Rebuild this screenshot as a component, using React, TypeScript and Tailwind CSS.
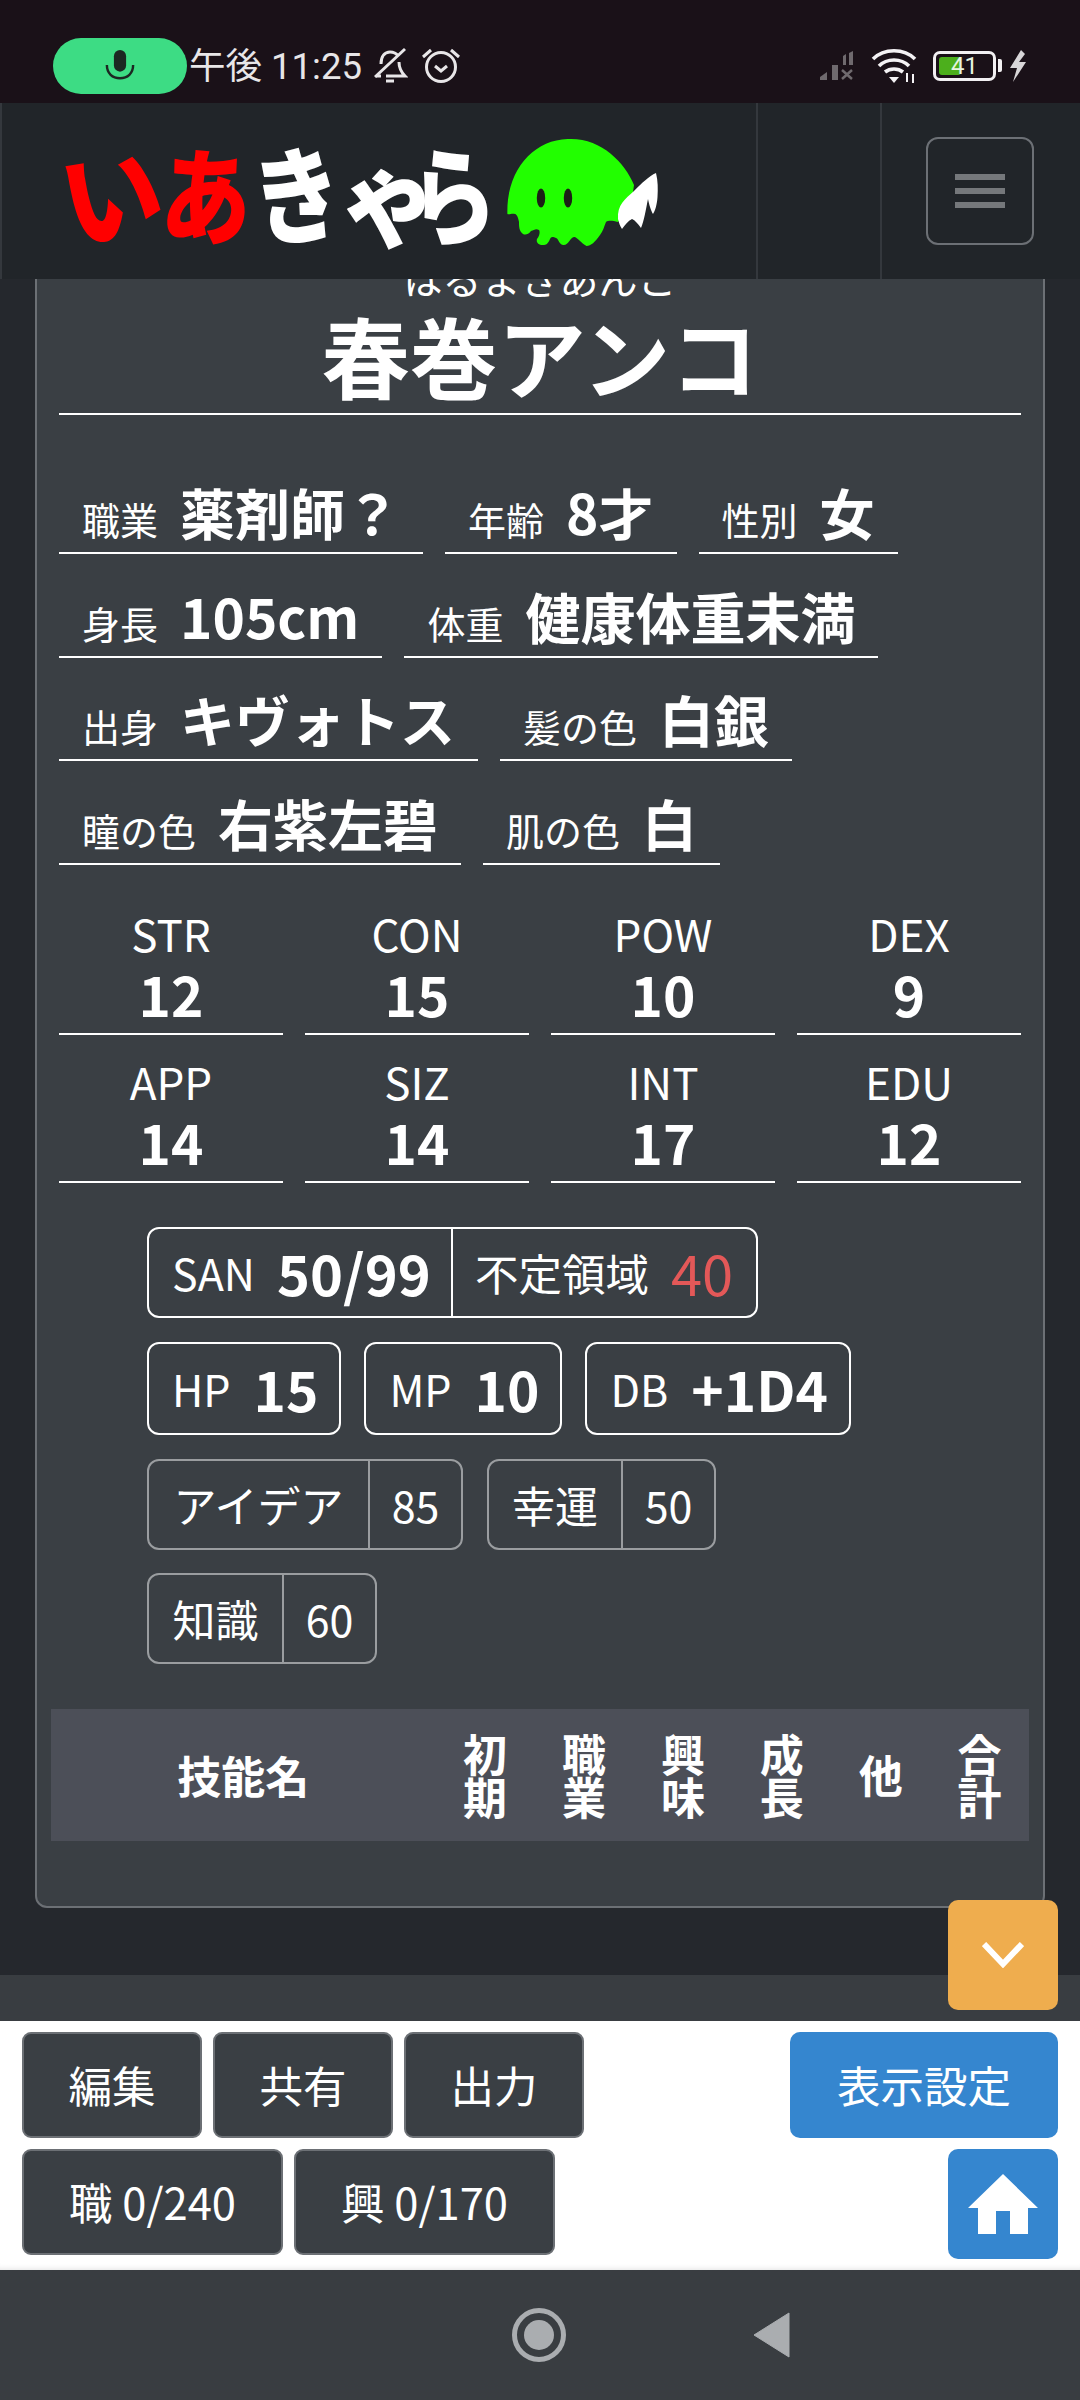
import React from "react";

const jp = "font-['Noto_Sans_CJK_JP','Noto_Sans',sans-serif]";

function Info({ label, value }: { label: string; value: string }) {
  return (
    <div className="flex items-baseline gap-[22px] h-[82px] px-[23px] border-b-2 border-white">
      <span className="text-[38px] leading-[82px] pt-[6px]">{label}</span>
      <span className="text-[55px] leading-[72px] font-bold">{value}</span>
    </div>
  );
}

function Stat({ label, value }: { label: string; value: string }) {
  return (
    <div className="flex flex-col items-center h-[126px] border-b-2 border-white">
      <span className="text-[44px] leading-[48px]">{label}</span>
      <span className="text-[55px] leading-[60px] font-bold mt-[6px]">{value}</span>
    </div>
  );
}

function Box({ label, value }: { label: string; value: string }) {
  return (
    <div className="flex items-center gap-[23px] h-[93px] pl-[23px] pr-[21px] border-2 border-white rounded-[12px]">
      <span className="text-[43px]">{label}</span>
      <span className="text-[55px] font-bold">{value}</span>
    </div>
  );
}

function Split({ label, value, w1, w2 }: { label: string; value: string; w1: string; w2: string }) {
  return (
    <div className="flex items-center h-[91px] border-2 border-[#9a9da0] rounded-[12px]">
      <span className={`text-[43px] text-center whitespace-nowrap ${w1}`}>{label}</span>
      <span className={`text-[43px] h-full flex items-center justify-center border-l-2 border-[#9a9da0] ${w2}`}>{value}</span>
    </div>
  );
}

function Head({ a, b }: { a: string; b?: string }) {
  return (
    <div className="w-[99px] flex flex-col items-center text-[44px] leading-[43px] font-bold">
      <span>{a}</span>
      {b && <span>{b}</span>}
    </div>
  );
}

function Btn({ children, w }: { children: React.ReactNode; w: string }) {
  return (
    <div className={`flex items-center justify-center h-[106px] bg-[#3a3f44] border-2 border-[#6c7075] rounded-[9px] text-white text-[43.5px] ${w}`}>
      {children}
    </div>
  );
}

function Ghost() {
  return (
    <svg width="151" height="107" viewBox="0 0 151 107" className="ml-[16px] mt-[2px] shrink-0">
      <path
        d="M0.4 75C-1 30 28 -1 64 0C95 0 118 24 127 46L125 60L111 83C106 82 102 81 99 83C97 88 96 92 93 96C88 103 84 107 79.5 107C74 104 71 99 67.6 98C63 98 62 106 56.6 106C52 106 52 100 49 99C45 97 44 98 43 100C41 105 39 106 36 106C31 106 29 103 30 100C33 96 33 92 32 91C29 89 27 91 24 92C21 96 18 96 16 95C12 92 12 87 12 83C11 77 9 75 8 75C5 74 2 76 0.4 75Z"
        fill="#22ff00"
      />
      <ellipse cx="34" cy="59" rx="4.2" ry="9.5" fill="#1c1f16" />
      <ellipse cx="61" cy="59" rx="4.2" ry="9.5" fill="#1c1f16" />
      <path
        d="M111 80C110 66 118 60 127 52C135 44 142 37 149 34C151 42 151 50 150.5 58C150 66 148 72 146 75C144 72 142 65 141 60C139 70 137 82 134 89C131 85 128 81 125 80C121 82 118 86 115 90C113 87 112 84 111 80Z"
        fill="#ffffff"
      />
    </svg>
  );
}

function Logo() {
  const c = "inline-block font-black leading-none text-[100px]";
  return (
    <div className={`flex items-center ml-[59px] h-full ${jp}`}>
      <div className="flex items-center w-[430px] h-[110px] whitespace-nowrap">
        <span className={`${c} text-[#ff0000] w-[96px] -rotate-[10deg] scale-y-[1.08]`}>い</span>
        <span className={`${c} text-[#ff0000] w-[90px] rotate-[3deg] scale-x-[0.9] scale-y-[1.05]`}>あ</span>
        <span className={`${c} text-white w-[90px] -rotate-[8deg] scale-x-[0.9] scale-y-[1.05]`}>き</span>
        <span className={`${c} text-white w-[66px] mt-[12px] -rotate-[10deg] scale-y-[1.05]`}>ゃ</span>
        <span className={`${c} text-white w-[88px] -rotate-[6deg] scale-x-[0.85] scale-y-[1.08]`}>ら</span>
      </div>
      <Ghost />
    </div>
  );
}

function StatusBar() {
  return (
    <div className="h-[103px] bg-[#1a1118] flex items-center shrink-0 text-[#e8e6e8]">
      <div className="flex items-center mt-[28px] w-full">
        <div className="ml-[53px] w-[134px] h-[56px] rounded-full bg-[#3ddc84] flex items-center justify-center shrink-0">
          <svg width="30" height="34" viewBox="0 0 32 36">
            <rect x="9.5" y="1" width="13" height="23" rx="6.5" fill="#1c2722" />
            <path d="M2 17C2 26 8 31 16 31C24 31 30 26 30 17" fill="none" stroke="#1c2722" strokeWidth="2.6" />
          </svg>
        </div>
        <span className={`ml-[2px] mt-[2px] text-[36.5px] leading-[40px] font-['Roboto','Noto_Sans_CJK_JP',sans-serif] whitespace-nowrap w-[175px]`}>午後 11:25</span>
        <svg width="36" height="38" viewBox="0 0 36 38" className="ml-[8px]" fill="none" stroke="#e8e6e8" strokeWidth="3">
          <path d="M9 17C9 9 13 5 18 5C21 5 24 6 26 9M27 15C27 20 29 25 33 29H14M4 29H9" />
          <path d="M3 30L33 2" />
          <path d="M14 34H22" />
        </svg>
        <svg width="40" height="38" viewBox="0 0 40 38" className="ml-[13px]" fill="none" stroke="#e8e6e8" strokeWidth="3">
          <circle cx="20" cy="20" r="14.5" />
          <path d="M2 10L10 3M38 10L30 3" />
          <path d="M14 19L20 24L26 19" />
        </svg>
        <svg width="38" height="30" viewBox="0 0 36 30" className="ml-[357px]" fill="#6f6a6e">
          <path d="M1 29V26L8 21V29Z" />
          <rect x="13" y="14" width="6" height="15" />
          <path d="M24 5L27 3V14H24ZM30 2L34 0V14H30Z" />
          <path d="M23 19L33 28M33 19L23 28" stroke="#6f6a6e" strokeWidth="2.5" fill="none" />
        </svg>
        <svg width="48" height="36" viewBox="0 0 48 36" className="ml-[15px]" fill="none" stroke="#f4f2f4" strokeWidth="3.6">
          <path d="M2 11C13 0 33 0 44 11" />
          <path d="M8 18C16 10 30 10 38 18" />
          <path d="M14 24C19 20 27 20 32 24" />
          <path d="M23 35L18 29H28Z" fill="#f4f2f4" stroke="none" />
          <path d="M36 25V34M42 26V35" strokeWidth="2" />
        </svg>
        <div className="relative ml-[14px] w-[63px] h-[30px] rounded-[7px] border-[3px] border-[#f2f0f2] flex items-center shrink-0">
          <div className="absolute left-[3px] top-[3px] bottom-[3px] w-[22px] rounded-[3px] bg-[#4caf1c]" />
          <span className="relative w-full text-center text-[24px] leading-[24px] text-[#e8f5e0] font-['Roboto',sans-serif]">41</span>
        </div>
        <div className="ml-[2px] w-[4px] h-[13px] bg-[#f2f0f2] rounded-r-[2px]" />
        <svg width="18" height="32" viewBox="0 0 18 32" className="ml-[7px]" fill="#d8d6d8">
          <path d="M12 0L1 18H8L4 32L17 12H10L16 4Z" />
        </svg>
      </div>
    </div>
  );
}

function Header() {
  return (
    <div className="h-[176px] bg-[#212529] border-l-2 border-[#34383d] flex shrink-0">
      <div className="w-[756px] border-r-2 border-[#34383d] h-full">
        <Logo />
      </div>
      <div className="w-[124px] border-r-2 border-[#34383d] h-full" />
      <div className="flex-1 flex items-center justify-start pl-[44px]">
        <div className="w-[108px] h-[108px] rounded-[12px] border-2 border-[#6c7075] flex flex-col items-center justify-center gap-[8px]">
          <div className="w-[50px] h-[6px] bg-[#75787b]" />
          <div className="w-[50px] h-[6px] bg-[#75787b]" />
          <div className="w-[50px] h-[6px] bg-[#75787b]" />
        </div>
      </div>
    </div>
  );
}

function Card() {
  return (
    <div className="ml-[35px] w-[1010px] h-[1657px] -mt-[28px] bg-[#3a3f44] border-2 border-[#6c7075] rounded-b-[12px] px-[22px] text-white">
      <div className="text-center text-[39px] leading-[48px]">はるまきあんこ</div>
      <div className="text-center text-[88px] leading-[100px] font-bold h-[111px] border-b-2 border-white mt-[3px]">春巻アンコ</div>
      <div className="mt-[57px] flex flex-col gap-[21.6px]">
        <div className="flex gap-[22px]">
          <Info label="職業" value="薬剤師？" />
          <Info label="年齢" value="8才" />
          <Info label="性別" value="女" />
        </div>
        <div className="flex gap-[22px]">
          <Info label="身長" value="105cm" />
          <Info label="体重" value="健康体重未満" />
        </div>
        <div className="flex gap-[22px]">
          <Info label="出身" value="キヴォトス" />
          <Info label="髪の色" value="白銀" />
        </div>
        <div className="flex gap-[22px]">
          <Info label="瞳の色" value="右紫左碧" />
          <Info label="肌の色" value="白" />
        </div>
      </div>
      <div className="mt-[44px] grid grid-cols-4 gap-x-[22px] gap-y-[22px]">
        <Stat label="STR" value="12" />
        <Stat label="CON" value="15" />
        <Stat label="POW" value="10" />
        <Stat label="DEX" value="9" />
        <Stat label="APP" value="14" />
        <Stat label="SIZ" value="14" />
        <Stat label="INT" value="17" />
        <Stat label="EDU" value="12" />
      </div>
      <div className="ml-[88px] mt-[44px] flex flex-col items-start">
        <div className="flex items-center h-[91px] w-[611px] border-2 border-white rounded-[12px]">
          <div className="flex items-center gap-[22px] w-[304px] pl-[23px] h-full border-r-2 border-white">
            <span className="text-[43px]">SAN</span>
            <span className="text-[56px] font-bold">50/99</span>
          </div>
          <div className="flex items-center gap-[22px] pl-[22px]">
            <span className="text-[43.5px]">不定領域</span>
            <span className="text-[56px] text-[#e35858]">40</span>
          </div>
        </div>
        <div className="flex gap-[23px] mt-[24px]">
          <Box label="HP" value="15" />
          <Box label="MP" value="10" />
          <Box label="DB" value="+1D4" />
        </div>
        <div className="flex gap-[24px] mt-[24px]">
          <Split label="アイデア" value="85" w1="w-[219px]" w2="w-[93px]" />
          <Split label="幸運" value="50" w1="w-[132px]" w2="w-[93px]" />
        </div>
        <div className="flex mt-[23px]">
          <Split label="知識" value="60" w1="w-[133px]" w2="w-[93px]" />
        </div>
      </div>
      <div className="-mx-[8px] mt-[45px] h-[132px] bg-[#4c4f58] flex items-center">
        <div className="w-[385px] text-center text-[44px] font-bold">技能名</div>
        <Head a="初" b="期" />
        <Head a="職" b="業" />
        <Head a="興" b="味" />
        <Head a="成" b="長" />
        <Head a="他" />
        <Head a="合" b="計" />
      </div>
    </div>
  );
}

export default function App() {
  return (
    <div className={`relative w-[1080px] h-[2400px] flex flex-col overflow-hidden bg-white ${jp}`}>
      <StatusBar />
      <Header />
      <main className="h-[1696px] bg-[#25282d] overflow-hidden shrink-0">
        <Card />
      </main>
      <div className="h-[46px] bg-[#393d41] shrink-0" />
      <div className="h-[249px] bg-white shrink-0 px-[22px] pt-[11px] flex justify-between shadow-[inset_0_-6px_6px_-6px_rgba(0,0,0,0.15)]">
        <div className="flex flex-col gap-[11px]">
          <div className="flex gap-[11px]">
            <Btn w="w-[180px]">編集</Btn>
            <Btn w="w-[180px]">共有</Btn>
            <Btn w="w-[180px]">出力</Btn>
          </div>
          <div className="flex gap-[11px]">
            <Btn w="w-[261px]">職 0/240</Btn>
            <Btn w="w-[261px]">興 0/170</Btn>
          </div>
        </div>
        <div className="flex flex-col items-end gap-[11px]">
          <div className="w-[268px] h-[106px] rounded-[10px] bg-[#3586cf] text-white text-[43.5px] flex items-center justify-center">表示設定</div>
          <div className="w-[110px] h-[110px] rounded-[10px] bg-[#3586cf] flex items-center justify-center">
            <svg width="70" height="60" viewBox="0 0 70 60" fill="#ffffff">
              <path d="M35 0L70 34H60V60H42V37H28V60H10V34H0Z" />
            </svg>
          </div>
        </div>
      </div>
      <div className="flex-1 bg-[#393d41] flex items-center pl-[512px]">
        <svg width="54" height="54" viewBox="0 0 54 54">
          <circle cx="27" cy="27" r="24.5" fill="none" stroke="#aaadb0" strokeWidth="5" />
          <circle cx="27" cy="27" r="15" fill="#aaadb0" />
        </svg>
        <svg width="38" height="46" viewBox="0 0 38 46" className="ml-[187px]">
          <path d="M36 1V45L1 23Z" fill="#aaadb0" stroke="#aaadb0" strokeLinejoin="round" />
        </svg>
      </div>
      <div className="absolute left-[948px] top-[1900px] w-[110px] h-[110px] rounded-[10px] bg-[#efad4e] flex items-center justify-center">
        <svg width="42" height="26" viewBox="0 0 42 26" fill="none" stroke="#ffffff" strokeWidth="6">
          <path d="M2 2L21 22L40 2" />
        </svg>
      </div>
    </div>
  );
}
